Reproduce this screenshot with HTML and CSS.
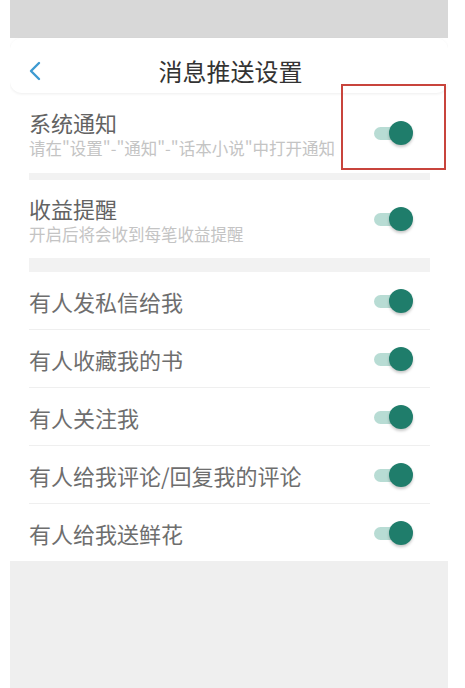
FILE: index.html
```html
<!DOCTYPE html>
<html lang="zh-CN">
<head>
    <meta charset="UTF-8">
    <meta name="viewport" content="width=device-width, initial-scale=1.0">
    <title>消息推送设置</title>
    <link rel="stylesheet" href="styles.css">
</head>
<body>
    <div class="screen">
        <div class="status-bar"></div>

        <div class="header">
            <svg class="back" width="14" height="20" viewBox="0 0 14 20">
                <path d="M11 2 L3 10 L11 18" fill="none" stroke="#3d9ad1" stroke-width="2.4" stroke-linecap="round" stroke-linejoin="round"/>
            </svg>
            <h1>消息推送设置</h1>
        </div>

        <div class="content">
            <div class="setting setting-first">
                <div class="setting-text">
                    <div class="setting-name">系统通知</div>
                    <div class="setting-desc">请在"设置"-"通知"-"话本小说"中打开通知</div>
                </div>
                <span class="switch"><span class="knob"></span></span>
            </div>
            <div class="band"></div>

            <div class="setting setting-second">
                <div class="setting-text">
                    <div class="setting-name">收益提醒</div>
                    <div class="setting-desc">开启后将会收到每笔收益提醒</div>
                </div>
                <span class="switch"><span class="knob"></span></span>
            </div>
            <div class="band band-thick"></div>

            <div class="row">
                <span class="row-name">有人发私信给我</span>
                <span class="switch"><span class="knob"></span></span>
            </div>
            <div class="row">
                <span class="row-name">有人收藏我的书</span>
                <span class="switch"><span class="knob"></span></span>
            </div>
            <div class="row">
                <span class="row-name">有人关注我</span>
                <span class="switch"><span class="knob"></span></span>
            </div>
            <div class="row">
                <span class="row-name">有人给我评论/回复我的评论</span>
                <span class="switch"><span class="knob"></span></span>
            </div>
            <div class="row row-last">
                <span class="row-name">有人给我送鲜花</span>
                <span class="switch"><span class="knob"></span></span>
            </div>
        </div>

        <div class="footer"></div>

        <div class="highlight"></div>
    </div>
</body>
</html>
```

FILE: styles.css
```css
body {
    margin: 0;
    background: #fff;
    font-family: "Noto Sans CJK SC", "Noto Sans", sans-serif;
}

.screen {
    position: relative;
    width: 438px;
    height: 688px;
    margin-left: 10px;
    display: flex;
    flex-direction: column;
    overflow: hidden;
}

.status-bar {
    height: 38px;
    background: #d8d8d8;
    flex-shrink: 0;
}

.header {
    height: 55px;
    box-sizing: border-box;
    padding-top: 10px;
    flex-shrink: 0;
    display: flex;
    align-items: center;
    justify-content: center;
    position: relative;
    background: #fff;
    border-radius: 12px;
    box-shadow: 0 1px 3px rgba(0, 0, 0, 0.07);
}

.header .back {
    position: absolute;
    left: 18px;
    top: 23px;
}

.header h1 {
    margin: 0;
    font-size: 24px;
    font-weight: normal;
    color: #333;
    line-height: 30px;
    padding-left: 3px;
}

.content {
    padding: 0 18px 0 19px;
}

.setting {
    display: flex;
    align-items: center;
    justify-content: space-between;
}

.setting-first {
    height: 80px;
}

.setting-second {
    height: 78px;
}

.setting-name {
    font-size: 22px;
    line-height: 28px;
    color: #636363;
}

.setting-desc {
    font-size: 16.5px;
    line-height: 22px;
    color: #c4c4c4;
    margin-top: 1px;
    white-space: nowrap;
}

.band {
    height: 7px;
    background: #f2f2f2;
}

.band-thick {
    height: 14px;
}

.row {
    height: 57px;
    display: flex;
    align-items: center;
    justify-content: space-between;
    border-bottom: 1px solid #efefef;
}

.row-last {
    border-bottom: none;
}

.row-name {
    font-size: 22px;
    color: #6e6e6e;
}

.switch {
    position: relative;
    width: 40px;
    height: 24px;
    margin-right: 17px;
    flex-shrink: 0;
}

.switch::before {
    content: "";
    position: absolute;
    left: 1px;
    top: 6px;
    width: 28px;
    height: 13px;
    border-radius: 7px;
    background: #b8dcd4;
}

.knob {
    position: absolute;
    right: 0;
    top: 0;
    width: 24px;
    height: 24px;
    border-radius: 50%;
    background: #1f7d6b;
    box-shadow: 0 2px 3px rgba(0, 0, 0, 0.22);
}

.footer {
    flex: 1;
    background: #efefef;
}

.highlight {
    position: absolute;
    left: 331px;
    top: 84px;
    width: 101px;
    height: 82px;
    border: 2px solid #c8443c;
}
```
